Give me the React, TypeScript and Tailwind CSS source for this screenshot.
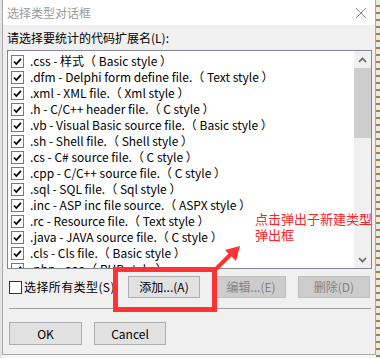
import React from 'react';

const rows = [
  '.css - 样式（ Basic style ）',
  '.dfm - Delphi form define file.（ Text style ）',
  '.xml - XML file.（ Xml style ）',
  '.h - C/C++ header file.（ C style ）',
  '.vb - Visual Basic source file.（ Basic style ）',
  '.sh - Shell file.（ Shell style ）',
  '.cs - C# source file.（ C style ）',
  '.cpp - C/C++ source file.（ C style ）',
  '.sql - SQL file.（ Sql style ）',
  '.inc - ASP inc file source.（ ASPX style ）',
  '.rc - Resource file.（ Text style ）',
  '.java - JAVA source file.（ C style ）',
  '.cls - Cls file.（ Basic style ）',
  '.php - aaa（ PHP style ）',
];

const Check: React.FC<{ checked?: boolean }> = ({ checked }) => (
  <div className="w-[13px] h-[13px] border border-[#7a7a7a] bg-white flex items-center justify-center shrink-0">
    {checked && (
      <svg width="11" height="11" viewBox="0 0 11 11">
        <path d="M2 5.5 L4.3 8 L9 2.8" fill="none" stroke="#000" strokeWidth="1.8" />
      </svg>
    )}
  </div>
);

export default function App() {
  return (
    <div className="w-[380px] h-[358px] bg-[#f7f7f7] relative overflow-hidden font-['Noto_Sans_CJK_SC',sans-serif] text-[12px] text-black">
      <div className="flex">
        <div className="w-[2px] h-[358px] bg-[#e4e4e4]" />
        {/* dialog window */}
        <div className="w-[374px] h-[355px] border-l border-r border-b border-[#a9a9a9] bg-[#f0f0f0] flex flex-col">
          {/* title bar */}
          <div className="h-[25px] bg-white flex items-center justify-between shrink-0">
            <span className="ml-[4px] text-[#999999] text-[12px] leading-none">选择类型对话框</span>
            <svg width="12" height="12" viewBox="0 0 12 12" className="mr-[8px]">
              <path d="M1 1 L11 11 M11 1 L1 11" stroke="#8a8a8a" strokeWidth="1" />
            </svg>
          </div>

          <div className="pl-[4px] pt-[6px] leading-[14px]">请选择要统计的代码扩展名(L):</div>

          {/* list box */}
          <div className="ml-[4px] mt-[5px] w-[365px] h-[219px] border border-[#828790] bg-white flex">
            <div className="flex-1 overflow-hidden pt-[2px] pl-[3px]">
              {rows.map((r, i) => (
                <div key={i} className="h-[16px] flex items-center gap-[6px] whitespace-nowrap">
                  <Check checked />
                  <span className="leading-[16px]">{r}</span>
                </div>
              ))}
            </div>
            {/* scrollbar */}
            <div className="w-[17px] bg-[#f0f0f0] flex flex-col shrink-0">
              <div className="h-[17px] flex items-center justify-center">
                <svg width="9" height="6" viewBox="0 0 9 6">
                  <path d="M1 5 L4.5 1.5 L8 5" fill="none" stroke="#606060" strokeWidth="1.6" />
                </svg>
              </div>
              <div className="h-[70px] bg-[#cdcdcd]" />
              <div className="flex-1" />
              <div className="h-[17px] flex items-center justify-center">
                <svg width="9" height="6" viewBox="0 0 9 6">
                  <path d="M1 1 L4.5 4.5 L8 1" fill="none" stroke="#606060" strokeWidth="1.6" />
                </svg>
              </div>
            </div>
          </div>

          {/* action row */}
          <div className="mt-[7px] h-[22px] flex items-center">
            <div className="ml-[6px] flex items-center gap-[2px] w-[119px]">
              <div className="w-[13px] h-[13px] border border-[#333333] bg-white" />
              <span className="leading-none text-[12px] tracking-[0.4px]">选择所有类型(S)</span>
            </div>
            <button className="w-[72px] h-[22px] bg-[#e1e1e1] border border-[#adadad] text-[12px] leading-none">添加...(A)</button>
            <button className="ml-[16px] w-[70px] h-[22px] bg-[#cccccc] border border-[#bfbfbf] text-[#838383] text-[12px] leading-none">编辑...(E)</button>
            <button className="ml-[12px] w-[72px] h-[22px] bg-[#cccccc] border border-[#bfbfbf] text-[#838383] text-[12px] leading-none">删除(D)</button>
          </div>

          <div className="mt-[10px] ml-[6px] w-[362px] h-px bg-[#a0a0a0]" />

          <div className="mt-[13px] ml-[6px] flex gap-[12px]">
            <button className="w-[73px] h-[23px] bg-[#e1e1e1] border border-[#adadad] text-[12px] leading-none">OK</button>
            <button className="w-[72px] h-[23px] bg-[#e1e1e1] border border-[#adadad] text-[12px] leading-none">Cancel</button>
          </div>
        </div>
        <div className="w-[4px] h-[358px] bg-[repeating-linear-gradient(180deg,#e8e8e8_0px,#e8e8e8_5px,#b08030_5px,#b08030_7px)]" />
      </div>

      {/* annotation */}
      <div className="absolute left-[113px] top-[267px] w-[104px] h-[45px] border-[5px] border-[#ff3333]" />
      <svg className="absolute left-[205px] top-[240px]" width="40" height="40" viewBox="0 0 40 40">
        <path d="M8 32 L28 12" stroke="#ff3333" strokeWidth="4" />
        <path d="M35 6 L20 10 L31 21 Z" fill="#ff3333" />
      </svg>
      <div className="absolute left-[255px] top-[211px] text-[13px] leading-[16px] text-[#ff2222]">
        点击弹出子新建类型
        <br />
        弹出框
      </div>
    </div>
  );
}
